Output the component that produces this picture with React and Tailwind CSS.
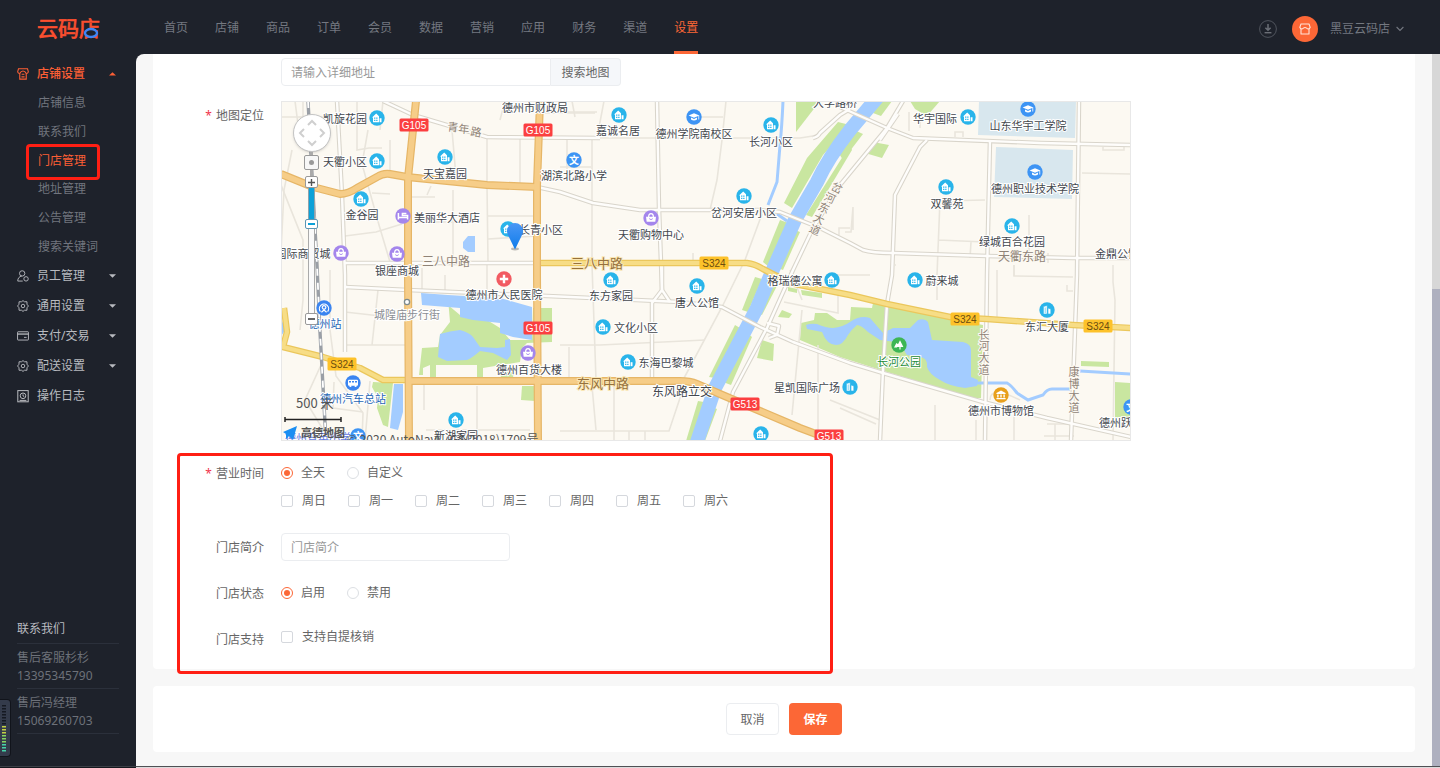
import React, { useState } from "react";
import clsx from "clsx";

/* ================= STATIC DATA ================= */
const topNav = ["首页", "店铺", "商品", "订单", "会员", "数据", "营销", "应用", "财务", "渠道", "设置"];

const shopMenu = ["店铺信息", "联系我们", "门店管理", "地址管理", "公告管理", "搜索关键词"];

const sideMenu = [
  { label: "员工管理", icon: StaffIcon, expandable: true },
  { label: "通用设置", icon: GearIcon, expandable: true },
  { label: "支付/交易", icon: CardIcon, expandable: true },
  { label: "配送设置", icon: GearIcon, expandable: true },
  { label: "操作日志", icon: LogIcon, expandable: false },
];

const contacts = [
  { name: "售后客服杉杉", phone: "13395345790" },
  { name: "售后冯经理", phone: "15069260703" },
];

const weekDays = ["周日", "周一", "周二", "周三", "周四", "周五", "周六"];

export default function App() {
  const [hours, setHours] = useState("all");
  const [status, setStatus] = useState("on");

  return (
    <div className="flex h-screen flex-col overflow-hidden bg-[#1e222b] text-xs text-[#666] font-['Noto_Sans','Noto_Sans_CJK_SC',sans-serif]">
      <Header />
      <div className="flex min-h-0 flex-1">
        <Sidebar />

        {/* MAIN CONTENT */}
        <main className="flex min-w-0 flex-1 flex-col gap-[17px] overflow-hidden rounded-tl-lg bg-[#f7f7f7] px-[17px]">
          <form id="store-form" className="relative rounded-b bg-white pt-1 pb-4">
            <FormRow className="mb-[15px]">
              <div className="flex h-7">
                <input
                  type="text"
                  aria-label="详细地址"
                  placeholder="请输入详细地址"
                  className="w-[270px] rounded-l border border-[#ebedf0] px-[9px] pt-0.5 outline-none placeholder:text-[#999]"
                />
                <button type="button" className="w-[70px] rounded-r border border-l-0 border-[#ebedf0] bg-[#f5f7fa] pt-0.5">
                  搜索地图
                </button>
              </div>
            </FormRow>

            <div className="flex flex-col gap-[18px]">
              <FormRow label="地图定位" required>
                <StoreMap />
              </FormRow>

              <FormRow label="营业时间" required>
                <div className="flex h-7 items-center gap-[22px]">
                  <Radio name="hours" label="全天" checked={hours === "all"} onChange={() => setHours("all")} />
                  <Radio name="hours" label="自定义" checked={hours === "custom"} onChange={() => setHours("custom")} />
                </div>
                <div className="flex h-7 items-center gap-[22px]">
                  {weekDays.map((day) => (
                    <Checkbox key={day} label={day} />
                  ))}
                </div>
              </FormRow>

              <FormRow label="门店简介" htmlFor="intro">
                <input
                  id="intro"
                  type="text"
                  placeholder="门店简介"
                  className="h-7 w-[229px] rounded border border-[#ebedf0] px-[9px] outline-none placeholder:text-[#999]"
                />
              </FormRow>

              <FormRow label="门店状态">
                <div className="flex h-7 items-center gap-[22px]">
                  <Radio name="status" label="启用" checked={status === "on"} onChange={() => setStatus("on")} />
                  <Radio name="status" label="禁用" checked={status === "off"} onChange={() => setStatus("off")} />
                </div>
              </FormRow>

              <FormRow label="门店支持">
                <div className="flex h-6 items-center">
                  <Checkbox label="支持自提核销" />
                </div>
              </FormRow>
            </div>

            {/* Highlight frame around the lower fields */}
            <div className="pointer-events-none absolute -bottom-[5px] left-6 h-[221px] w-[656px] rounded border-3 border-[#ff1f14]" />
          </form>

          {/* ACTIONS */}
          <div className="flex justify-center gap-[10px] rounded bg-white py-[17px]">
            <button type="button" className="h-8 w-[53px] rounded border border-[#ebedf0] pt-0.5">取消</button>
            <button type="submit" form="store-form" className="h-8 w-[53px] rounded bg-[#fc6736] pt-0.5 font-bold text-white">
              保存
            </button>
          </div>
        </main>

        {/* Scrollbar */}
        <div className="flex w-2 flex-col justify-end bg-[#d7d7d7]">
          <div className="h-[67%] bg-[#aeb0bf]" />
        </div>
      </div>

      {/* Bottom edge */}
      <div className="flex h-[2px]">
        <div className="w-[136px] border-t border-[#3c3f46] bg-[#15181e]" />
        <div className="flex-1 border-t border-[#4f5054] bg-[#dcdcdc]" />
      </div>
    </div>
  );
}

/* ================= HEADER ================= */
function Header() {
  return (
    <header className="flex h-[54px] shrink-0 items-center text-[#747880]">
      <a href="#home" aria-label="云码店" className="ml-[37px] w-[127px] pt-1">
        <svg width="68" height="28" viewBox="0 0 68 28" className="overflow-visible font-['Noto_Sans_CJK_SC',sans-serif]">
          <text x="0" y="21" fontSize="21" fill="#fb4f2f" stroke="#fb4f2f" strokeWidth="0.7">云码店</text>
          <ellipse cx="54" cy="18" rx="6" ry="4" fill="#1e222b" stroke="#3f86f5" strokeWidth="2.4" />
        </svg>
      </a>
      <nav className="flex h-full gap-[27px]">
        {topNav.map((item) => (
          <a
            key={item}
            href={`#${item}`}
            className={clsx(
              "flex h-full items-center border-b-3 pt-[5px]",
              item === "设置" ? "border-[#fc6736] text-[#fc6736]" : "border-transparent"
            )}
          >
            {item}
          </a>
        ))}
      </nav>
      <div className="ml-auto flex items-center pt-[3px] pr-9">
        <button type="button" aria-label="下载">
          <svg width="18" height="18" viewBox="0 0 18 18" fill="none" stroke="#6b6f77">
            <circle cx="9" cy="9" r="8.4" strokeWidth="0.9" stroke="#565a63" />
            <path d="M9 4v6M6.4 7.8 9 10.3l2.6-2.5" strokeWidth="1.5" />
            <path d="M5.6 12.7h6.8" strokeWidth="1.4" />
          </svg>
        </button>
        <span className="ml-[15px] flex h-[26px] w-[26px] items-center justify-center rounded-full bg-[#fc6736] text-[#ffe3d8]">
          <svg width="12" height="12" viewBox="0 0 12 12" fill="none" stroke="currentColor" strokeWidth="1.1">
            <path d="M2 1h8l1.2 3.4L10 6v5H2V6L.8 4.4z" strokeLinejoin="round" />
            <path d="M1.2 5.2q1.6 1.6 3.2 0 1.6-1.4 3.2 0 1.6 1.6 3.2 0" />
          </svg>
        </span>
        <button type="button" className="ml-3 flex items-center gap-1.5">
          黑豆云码店
          <svg width="8" height="6" viewBox="0 0 8 6" fill="none" stroke="currentColor" strokeWidth="1.1">
            <path d="M.6 1 4 4.4 7.4 1" />
          </svg>
        </button>
      </div>
    </header>
  );
}

/* ================= SIDEBAR ================= */
function Sidebar() {
  return (
    <aside className="relative flex w-[136px] shrink-0 flex-col pt-[5px] text-[#b9bbc0]">
      <a href="#shop" className="flex h-[30px] items-center gap-2 pr-5 pl-[17px] font-medium text-[#fc5f35]">
        <ShopIcon />
        店铺设置
        <Caret up />
      </a>
      <ul className="grid h-[172px] pl-[38px] text-[#71757e]">
        {shopMenu.map((item) => (
          <li key={item} className="relative flex items-center">
            <a href={`#${item}`} className={item === "门店管理" ? "text-[#fc5f35]" : ""}>{item}</a>
            {item === "门店管理" && (
              <span className="pointer-events-none absolute -top-0.5 -left-3 h-9 w-[74px] rounded border-3 border-[#ff1f14]" />
            )}
          </li>
        ))}
      </ul>
      {sideMenu.map(({ label, icon: Icon, expandable }) => (
        <a key={label} href={`#${label}`} className="flex h-[30px] items-center gap-2 pr-5 pl-[17px]">
          <Icon />
          {label}
          {expandable && <Caret />}
        </a>
      ))}

      {/* Contact block */}
      <div className="mt-auto px-[17px] pb-8 leading-[18px]">
        <h2 className="border-b border-[#2b303b] pb-[5px]">联系我们</h2>
        {contacts.map((c) => (
          <div key={c.phone} className="border-b border-[#2b303b] pt-[5px] pb-[3px] text-[#6d7179]">
            <p>{c.name}</p>
            <p>{c.phone}</p>
          </div>
        ))}
      </div>

      {/* Level meter docked on the left edge */}
      <div className="absolute bottom-[9px] left-0 h-[58px] w-[11px] rounded-r border border-l-0 border-[#11141b] bg-[#343b4b]">
        <svg width="8" height="48" viewBox="0 0 8 48" className="mt-1">
          {Array.from({ length: 16 }, (_, i) => (
            <rect
              key={i}
              x="2"
              y={i * 3 + 1}
              width="4"
              height="1.5"
              fill={i < 7 ? "#151922" : i < 10 ? "#c3d043" : i < 13 ? "#86d561" : "#45d3a9"}
            />
          ))}
        </svg>
      </div>
    </aside>
  );
}

function Caret({ up }) {
  return (
    <svg width="7" height="4" viewBox="0 0 7 4" className="ml-auto" fill="currentColor">
      <path d={up ? "M0 3.5 3.5.3 7 3.5z" : "M0 .3h7L3.5 3.8z"} />
    </svg>
  );
}

/* ================= FORM PARTS ================= */
function FormRow({ label, required, htmlFor, className, children }) {
  return (
    <div className={clsx("flex gap-[17px]", className)}>
      <div className="flex h-7 w-[111px] shrink-0 items-center justify-end gap-1 pt-0.5">
        {required && <span className="text-[#f0354b]">*</span>}
        {label && <label htmlFor={htmlFor}>{label}</label>}
      </div>
      <div className="min-w-0 flex-1">{children}</div>
    </div>
  );
}

function Radio({ name, label, checked, onChange }) {
  return (
    <label className="flex items-center gap-2">
      <input
        type="radio"
        name={name}
        checked={checked}
        onChange={onChange}
        className="h-3 w-3 appearance-none rounded-full border border-[#dcdfe3] bg-white bg-clip-content p-[2px] checked:border-[#fc6736] checked:bg-[#fc6736]"
      />
      {label}
    </label>
  );
}

function Checkbox({ label }) {
  return (
    <label className="flex items-center gap-[9px]">
      <input
        type="checkbox"
        className="h-3 w-3 appearance-none rounded-xs border border-[#d5d8dd] bg-white checked:border-[#fc6736] checked:bg-[#fc6736]"
      />
      {label}
    </label>
  );
}

/* ================= MAP DATA ================= */
const greens = [
  "796,101 820,101 796,132",
  "784,203 807,158 838,122 850,125 823,155 792,208",
  "850,145 852,150 812,217 806,215",
  "780,220 788,223 769,267 763,262",
  "795,230 800,232 783,270 778,268",
  "755,277 762,279 748,312 742,310",
  "773,278 780,280 762,315 757,313",
  "735,325 740,328 715,378 709,377",
  "747,333 752,337 731,385 723,382",
  "698,401 704,402 693,441 686,441",
  "712,407 717,409 705,441 700,441",
  "840,123 846,126 840,136",
  "873,113 880,101 892,101 881,116",
  "852,129 863,134 843,160 838,152",
  "873,142 889,145 882,158 865,153",
  "910,101 940,101 927,116 915,109",
  "448,298 448,305 460,315 487,320 500,328 510,340 532,340 533,308 552,308 552,342 527,343 522,348 520,362 483,368 483,378 477,377 477,365 436,365 436,377 430,377 430,365 423,368 423,375 419,375 422,348 438,347 440,335 450,322",
  "373,382 393,383 388,427 383,425 377,408 378,398 372,387",
  "522,386 535,386 535,401 521,400",
  "500,370 514,368 513,378 501,378",
  "801,323 814,320 815,313 827,313 837,320 850,320 851,307 872,308 873,303 983,325 981,398 973,398 887,372 840,357 800,340",
  "782,310 792,314 789,318 778,317",
  "762,340 774,344 773,361 757,358",
  "801,290 822,293 822,298 802,295",
  "788,287 797,289 797,293 788,291",
  "1081,361 1109,362 1109,367 1081,366",
  "1115,382 1131,383 1131,417 1115,418",
];

const waters = [
  "M421 293L448 295L500 298L532 307V340L513 337L500 333V323L473 320L460 317V308L422 305Z",
  "M440 334Q450 331 460 330Q470 333 473 337L480 347L497 348L505 347V340L510 339L511 355L507 360L493 353L480 351Q472 358 467 360L447 361L438 357Z",
  "M394 384H403V412L398 430L390 428Z",
  "M463 242L468 236H475V252H468L463 248Z",
  "M806 325Q811 323 817 324Q826 328 833 328Q843 327 850 322Q860 315 870 318L883 333L893 328L910 328L918 320Q925 318 928 322Q930 331 932 340L963 342Q971 344 971 350V377L978 380L977 386L965 388Q949 386 940 380Q929 374 927 367Q928 358 920 357L907 355Q903 350 903 343L880 340L868 332Q861 325 857 325Q852 329 848 335Q843 345 836 345Q827 345 822 332L807 329Z",
  "M281 318L284 326V332L281 336Z",
];

const streams = [
  "M783 101Q782 125 780 145L777 182L768 205",
  "M777 214L787 221",
  "M977 383L1007 383Q1011 385 1017 393L1028 400L1043 395Q1047 389 1052 389H1070",
  "M1080 371L1131 374",
];

const lanes = [
  "M281 252L284 190L292 150",
  "M357 101V150L369 148H382M390 140V170",
  "M368 130L362 164L379 225L390 262M380 130L383 101",
  "M372 193L390 194M345 236L376 232L402 224",
  "M408 197H435M427 195L431 186",
  "M452 130L456 177M453 190V262M487 137V185L488 262",
  "M488 239L537 236M410 222H462M488 216H537",
  "M345 312L407 319M345 345H408M372 345L378 290",
  "M281 185L303 240V300L300 330M330 270V330L336 376L363 413L362 441",
  "M321 365L305 400L330 441M334 382L333 408L363 412",
  "M370 381L365 441M424 377V410M477 386V430M426 430H530",
  "M445 275V290M487 262V290M422 268V290",
  "M520 139V186M505 101L500 120M545 113H595M572 101L575 117",
  "M604 101L597 138M560 112H597M567 140V169M560 167H591M592 138V265L596 380",
  "M599 138H800L813 136",
  "M726 101L722 140L717 180L710 210M692 117H723",
  "M762 214L745 260L722 307L683 380",
  "M560 345H600L705 340M569 347V380M592 386L596 430",
  "M614 386V441M560 431H669L682 392M629 431V441M645 431V441",
  "M693 253V262M790 270L802 300M784 302L838 313V293",
  "M802 310L792 415M818 345V436L850 449M830 400L880 420",
  "M838 285V275H870M839 235V228H850",
  "M909 112V131M920 128V112M955 137V132H963V137",
  "M939 201L985 200M940 200L937 275M938 240L985 242M971 242L970 258",
  "M1029 215V253M1048 263V253M1082 173L1131 174M1014 265V276L1073 277",
  "M895 265H896M937 275V300M1014 276V265M1067 285V291H1073M1113 265V282L1115 300L1113 441",
  "M853 230V207M845 232H851L853 207",
  "M935 405V441M976 420V441M1014 405V441M1047 424H1074M1044 436H1074M1055 424V441",
  "M840 408L876 424M997 270V320",
  "M1020 400Q990 385 990 400",
  "M1103 147V150H1124V146",
  "M295 101L300 140M281 117H330M303 101V118",
];

const streets = [
  "M337 101L342 195L345 275V352",
  "M383 101L413 115L487 137L600 138",
  "M813 138Q818 137 820 133L840 115L850 109",
  "M345 263H537",
  "M345 287L408 290L570 297L680 302L722 307L760 327L793 342L850 363L883 373L983 402L1047 418L1131 437",
  "M657 101L659 208L662 290",
  "M662 262V290L652 303V381M662 290L670 302",
  "M537 187L560 192L593 203L640 210H760L780 212L820 228L850 243L863 250Q872 253 893 253L987 256L1073 258H1131",
  "M903 101L887 128L840 185L813 228L793 270L767 328L733 392L720 441",
  "M840 107L887 128L913 138L1040 143L1131 145",
  "M927 140L920 147L895 195L892 275L887 304L883 370L880 441",
  "M990 140L987 275L985 441",
  "M1079 101L1077 275L1071 441",
  "M898 114L889 127L880 140",
  "M767 323L779 326L777 335L769 338",
];

const yellowRoads = [
  "M284 308L287 332L283 347L323 357L360 368L383 380H408",
  "M540 263H747Q755 264 763 269L790 283L850 295L887 304L950 317L987 319L1073 325L1131 328",
];

const orangeRoads = [
  "M281 174L313 187L340 194Q348 194 357 188L377 177Q383 173 390 174L407 177L487 185L537 187",
  "M409 381H680Q690 381 697 384L720 394L760 411L800 428L840 443",
  "M416 101L408 178V275L409 441",
  "M540 101L537 185V275L538 441",
];

// type, icon x, icon y, label, label centre x, label centre y
const places = [
  ["house", 377, 118, "凯旋花园", 345, 119],
  ["house", 377, 161, "天衢小区", 345, 162],
  ["house", 445, 157, "天宝嘉园", 445, 174],
  ["house", 361, 199, "金谷园", 362, 215],
  ["bed", 403, 216, "美丽华大酒店", 447, 218],
  ["bag", 341, 253, "国际商贸城", 303, 254],
  ["bag", 397, 254, "银座商城", 397, 271],
  ["house", 508, 229, "长青小区", 541, 230],
  ["house", 619, 115, "嘉诚名居", 618, 131],
  ["cap", 694, 117, "德州学院南校区", 694, 134],
  ["house", 771, 125, "长河小区", 771, 142],
  ["school", 574, 160, "湖滨北路小学", 574, 176],
  ["house", 744, 196, "岔河安居小区", 744, 213],
  ["bag", 651, 218, "天衢购物中心", 651, 235],
  ["house", 968, 117, "华宇国际", 935, 119],
  ["cap", 1028, 109, "山东华宇工学院", 1028, 126],
  ["cap", 1035, 172, "德州职业技术学院", 1035, 189],
  ["house", 946, 187, "双馨苑", 947, 204],
  ["house", 1012, 226, "绿城百合花园", 1012, 242],
  ["hospital", 504, 279, "德州市人民医院", 504, 295],
  ["station", 324, 308, "德州站", 325, 324, "#1f66b5"],
  ["bag", 528, 353, "德州百货大楼", 529, 370],
  ["bus", 353, 383, "德州汽车总站", 353, 399, "#1f66b5"],
  ["house", 456, 420, "新湖家园", 456, 436],
  ["school", 358, 436, "德州育英小学", 318, 438, "#5f78e0"],
  ["house", 611, 280, "东方家园", 611, 296],
  ["house", 697, 286, "唐人公馆", 697, 303],
  ["house", 832, 280, "格瑞德公寓", 795, 281],
  ["house", 603, 327, "文化小区", 636, 328],
  ["house", 628, 362, "东海巴黎城", 666, 363],
  ["tower", 850, 387, "星凯国际广场", 807, 388],
  ["house", 761, 434, "", 0, 0],
  ["house", 915, 280, "蔚来城", 942, 281],
  ["park", 899, 345, "长河公园", 899, 362, "#1d8a35"],
  ["tower", 1047, 310, "东汇大厦", 1047, 327],
  ["museum", 1001, 395, "德州市博物馆", 1001, 411],
  ["school", 1131, 407, "德州跃华学校", 1132, 423],
];

const areaLabels = [
  ["德州市财政局", 535, 108],
  ["大学路桥", 835, 103],
  ["金鼎公馆", 1117, 254],
];

// Road names set one character at a time: char, x, y, rotation
const roadChars = [
  ["青", 453, 127, 6], ["年", 464, 129, 6], ["路", 476, 132, 10],
  ["长", 984, 335, 0], ["河", 984, 346, 0], ["大", 984, 358, 0], ["道", 984, 370, 0],
  ["康", 1074, 372, 0], ["博", 1074, 384, 0], ["大", 1074, 396, 0], ["道", 1074, 408, 0],
  ["岔", 837, 188, 25], ["河", 830, 198, 25], ["东", 824, 208, 25], ["大", 819, 219, 25], ["道", 815, 230, 25],
];

const shields = [
  ["G105", 414, 125], ["G105", 538, 130], ["G105", 538, 328], ["G513", 745, 404], ["G513", 829, 436],
  ["S324", 714, 263], ["S324", 342, 364], ["S324", 965, 319], ["S324", 1098, 326],
];

const poiColors = {
  house: "#29b4ea",
  tower: "#29b4ea",
  cap: "#3d94f4",
  school: "#3d94f4",
  bed: "#a486ec",
  bag: "#a486ec",
  hospital: "#f25b62",
  station: "#3a84f0",
  bus: "#3a84f0",
  park: "#3eb655",
  museum: "#e8a01c",
};

/* ================= MAP ================= */
function StoreMap() {
  return (
    <div className="relative h-[340px] w-full max-w-[850px] overflow-hidden border border-[#e8e8e8] bg-[#fcf9f2]">
      <svg
        viewBox="282 102 848 338"
        preserveAspectRatio="xMinYMin slice"
        className="h-full w-full font-['Noto_Sans_CJK_SC',sans-serif]"
        fill="none"
        textAnchor="middle"
      >
        <g fill="#d8e7ee">
          <path d="M979 101h97l-1 37-97-3zM996 147l77 3-1 49-78-2z" />
        </g>
        <g fill="#c9e6a0">
          {greens.map((points) => <polygon key={points} points={points} />)}
        </g>
        <g stroke="#e9e5dc" strokeWidth="1.6">
          {lanes.map((d) => <path key={d} d={d} />)}
        </g>
        <g fill="#a3ccff">
          {waters.map((d) => <path key={d} d={d} />)}
        </g>
        <g stroke="#a3ccff" strokeWidth="3">
          {streams.map((d) => <path key={d} d={d} />)}
          <path d="M882 92L850 130Q828 158 817 182L795 220L771 274L757 308L715 388L696 445" strokeWidth="14" />
        </g>
        <RoadLayer paths={streets} edge="#d9d5cb" fill="#fefdfb" outer={4.5} inner={2.4} />
        <RoadLayer paths={yellowRoads} edge="#ebc75c" fill="#f7dd86" outer={6.5} inner={4.2} />
        <RoadLayer paths={orangeRoads} edge="#e6b667" fill="#f6cd88" outer={8} inner={5.6} />

        {/* Railway */}
        <path d="M308 101L317 265L320 332L326 441" stroke="#9a9fa6" strokeWidth="3.4" />
        <path d="M308 101L317 265L320 332L326 441" stroke="#fff" strokeWidth="1.8" strokeDasharray="7 7" />

        {/* Road names */}
        <g fontSize="11" fill="#8f8377" stroke="#fcf9f2" strokeWidth="2" paintOrder="stroke">
          <text x="446" y="266" fontSize="12">三八中路</text>
          <text x="1022" y="261" fontSize="12">天衢东路</text>
          {roadChars.map(([char, x, y, angle]) => (
            <text key={`${x}-${y}`} x={x} y={y + 4} transform={`rotate(${angle} ${x} ${y})`}>{char}</text>
          ))}
        </g>
        <g fontSize="13" fill="#96713c" stroke="#f9e6b4" strokeWidth="2" paintOrder="stroke">
          <text x="597" y="268">三八中路</text>
          <text x="603" y="388">东风中路</text>
        </g>

        {/* Road shields */}
        {shields.map(([code, x, y]) => (
          <g key={`${code}-${x}-${y}`}>
            <rect x={x - 14.5} y={y - 6.5} width="29" height="13" rx="1.5" fill={code[0] === "G" ? "#fb3f40" : "#fdc22a"} />
            <text
              x={x}
              y={y + 3.5}
              fontSize="10"
              className="font-['Liberation_Sans',sans-serif]"
              fill={code[0] === "G" ? "#fff" : "#6b4d10"}
            >
              {code}
            </text>
          </g>
        ))}

        {/* Places */}
        <circle cx="407" cy="302" r="2.6" fill="#fff" stroke="#7d8b8e" strokeWidth="1.3" />
        <g fontSize="11" fill="#43474d" stroke="#fff" strokeWidth="2" paintOrder="stroke">
          <text x="407" y="319" fill="#8a8d92">城隍庙步行街</text>
          <text x="682" y="396" fontSize="12">东风路立交</text>
          {areaLabels.map(([label, x, y]) => (
            <text key={label} x={x} y={y + 4}>{label}</text>
          ))}
          {places.map(([, x, y, label, lx, ly, color]) => (
            <text key={`${x}-${y}`} x={lx} y={ly + 4} fill={color}>{label}</text>
          ))}
        </g>
        {places.map(([type, x, y]) => (
          <g key={`${x}-${y}`} transform={`translate(${x} ${y})`}>
            <circle r="7.7" fill={poiColors[type]} />
            <PlaceGlyph type={type} />
          </g>
        ))}

        {/* Store marker */}
        <defs>
          <linearGradient id="pin" x1="0" y1="0" x2="0" y2="1">
            <stop offset="0" stopColor="#4a97f5" />
            <stop offset="1" stopColor="#0f7cea" />
          </linearGradient>
        </defs>
        <ellipse cx="515" cy="249" rx="4" ry="1.4" fill="#000" fillOpacity="0.25" />
        <path d="M515 249.500L508 235Q507 233 507 231A8 8 0 0 1 523 231Q523 233 522 235Z" fill="url(#pin)" />

        {/* Scale and copyright */}
        <path d="M285 417v5M285 419.500h56M341 417v5" stroke="#222" strokeWidth="1.5" />
        <path d="M283 432l14-6-4 14-4-4-3 3v-5z" fill="#1b8ef2" />
        <g fill="#555" textAnchor="start">
          <text x="296" y="408" fontSize="13">500 米</text>
          <text x="301" y="437" fontSize="11" fontWeight="700">高德地图</text>
          <text x="347" y="444" fontSize="12">© 2020 AutoNavi - GS(2018)1709号</text>
        </g>
      </svg>
      <MapControls />
    </div>
  );
}

function RoadLayer({ paths, edge, fill, outer, inner }) {
  return (
    <g strokeLinejoin="round">
      {paths.map((d) => <path key={`edge-${d}`} d={d} stroke={edge} strokeWidth={outer} />)}
      {paths.map((d) => <path key={`fill-${d}`} d={d} stroke={fill} strokeWidth={inner} />)}
    </g>
  );
}

function PlaceGlyph({ type }) {
  switch (type) {
    case "house":
      return (
        <g fill="#fff">
          <path d="M-5-.4-.8-4.400 2-1.800V4.200H-4V-.4z" />
          <path d="M2.600.2h1.900v4H2.600z" />
          <path d="M-2.900-.4h1.300V.8h-1.300zM-.8-.4H.5V.8H-.8zM-2.900 1.700h1.300v1.200h-1.300zM-.8 1.700H.5v1.200H-.8z" fill="#29b4ea" />
        </g>
      );
    case "tower":
      return <path d="M-3.6-3.4.2-4.6V4h-3.8zM1-2l2.8 1v5H1zM-1.8-2.5V3" fill="#fff" stroke="#29b4ea" strokeWidth="0.6" />;
    case "cap":
      return (
        <g fill="#fff">
          <path d="M-5.4-1.6 0-3.8l5.4 2.2L0 .8z" />
          <path d="M-3 .6 0 2 3 .6v2Q0 4.6-3 2.6z" />
          <path d="M4.4-1.4h.8v4h-.8z" />
        </g>
      );
    case "school":
      return <text y="3.5" fontSize="10" fontWeight="700" fill="#fff" textAnchor="middle">文</text>;
    case "bed":
      return <path d="M-4.6-3v6.4M-4.6 1.6h9.2M4.6 3.4V-.4H-.6v-2h4" stroke="#fff" strokeWidth="1.5" />;
    case "bag":
      return (
        <g>
          <path d="M-5-1.200H5l-.7 5h-8.600z" fill="#fff" />
          <path d="M-2.400-1Q-2.400-4.400 0-4.400t2.400 3.400" stroke="#fff" strokeWidth="1.2" />
          <path d="M-1.8.6Q0 2.8 1.8.6" stroke="#a486ec" strokeWidth="0.9" />
        </g>
      );
    case "hospital":
      return <path d="M0-4.2v8.4M-4.2 0h8.4" stroke="#fff" strokeWidth="2.4" />;
    case "station":
      return <path d="M-3.6 3.6A4.6 4.6 0 1 1 3.6 3.6M0-2.4a1.8 1.8 0 1 0 .1 0M-2.6 4.2 0 2l2.6 2.2" stroke="#fff" strokeWidth="1.2" />;
    case "bus":
      return (
        <g>
          <rect x="-5" y="-3.2" width="10" height="6" rx="1" fill="#fff" />
          <path d="M-4-2h2v1.6h-2zM-1-2h2v1.6h-2zM2-2h2v1.6H2z" fill="#3a84f0" />
          <circle cx="-2.6" cy="3" r="1.1" fill="#fff" />
          <circle cx="2.6" cy="3" r="1.1" fill="#fff" />
        </g>
      );
    case "park":
      return <path d="M1-4.8 4.4 2H1.6v2.4H.4V2h-2.8zM-2.6-2-.8-.8-2 2.6h-3z" fill="#fff" />;
    case "museum":
      return <path d="M0-4.6 4.6-2v1h-9.2v-1zM-3.8-.4h1.4v3h-1.4zM-.7-.4H.7v3H-.7zM2.4-.4h1.4v3H2.4zM-4.6 3h9.2v1.2h-9.2z" fill="#fff" />;
    default:
      return null;
  }
}

function MapControls() {
  return (
    <div className="absolute top-3 left-[10px] flex w-[39px] flex-col items-center">
      <button type="button" aria-label="移动地图" className="h-[38px] w-[38px] rounded-full border border-[#c4c4c4] bg-white shadow-sm">
        <svg viewBox="0 0 36 36" className="h-full w-full" fill="none" stroke="#cfcfcf" strokeWidth="2">
          <path d="m14 10 4-4 4 4M14 26l4 4 4-4M10 14l-4 4 4 4M26 14l4 4-4 4" />
        </svg>
      </button>
      <span className="h-[3px] w-[3px] bg-[#aaa]" />
      <button type="button" aria-label="定位" className="flex h-[15px] w-[15px] items-center justify-center rounded-xs border border-[#999] bg-[#f7f7f7]">
        <span className="h-[5px] w-[5px] rounded-full bg-[#999]" />
      </button>
      <span className="h-[6px] w-[3px] bg-[#aaa]" />
      <button type="button" aria-label="放大" className="flex h-3 w-[13px] items-center justify-center rounded-xs border border-[#999] bg-white">
        <svg width="7" height="7" viewBox="0 0 7 7" stroke="#555" strokeWidth="1.4"><path d="M3.5 0v7M0 3.5h7" /></svg>
      </button>
      <span className="h-[31px] w-[7px] border-x border-[#8fa3ac] bg-[#0ba1d8]" />
      <span className="flex h-[10px] w-[13px] items-center justify-center rounded-xs border border-[#5c96b3] bg-white">
        <span className="h-[2px] w-[7px] bg-[#0ba1d8]" />
      </span>
      <span className="h-[84px] w-[7px] border-x border-[#aaa] bg-[#fafafa]" />
      <button type="button" aria-label="缩小" className="flex h-3 w-[13px] items-center justify-center rounded-xs border border-[#999] bg-white">
        <span className="h-[2px] w-[7px] bg-[#666]" />
      </button>
    </div>
  );
}

/* ================= ICONS ================= */
function ShopIcon() {
  return (
    <svg width="12" height="12" viewBox="0 0 13 13" fill="none" stroke="currentColor" strokeWidth="1.2">
      <path d="M1.6.8h9.8L12.300 4.200Q11.800 6 10 6V12H3V6Q1.200 6 .7 4.200z" />
      <path d="M3.200 5.600Q4.200 3.200 6.500 3.200T9.800 5.600M5 6.800h3M4.800 9.600h3.400" />
    </svg>
  );
}

function StaffIcon() {
  return (
    <svg width="12" height="12" viewBox="0 0 13 13" fill="none" stroke="currentColor">
      <circle cx="5.6" cy="3.7" r="2.9" />
      <path d="M.8 12c0-3 1.6-5 4.4-5.4M.8 12h5.4" />
      <circle cx="9.8" cy="9.6" r="2.4" />
    </svg>
  );
}

function GearIcon() {
  return (
    <svg width="12" height="12" viewBox="0 0 13 13" fill="none" stroke="currentColor" strokeLinejoin="round">
      <path d="m6.5.6 1.500 1.300h2.800v2.700l1.600 1.900-1.600 1.900v2.700H8L6.500 12.400 5 11.100H2.200V8.400L.6 6.500l1.600-1.900V1.900H5z" />
      <circle cx="6.5" cy="6.5" r="1.9" />
    </svg>
  );
}

function CardIcon() {
  return (
    <svg width="12" height="12" viewBox="0 0 13 13" fill="none" stroke="currentColor">
      <rect x=".6" y="1.9" width="11.8" height="9" rx=".6" />
      <path d="M.6 4.4h11.8" strokeWidth="1.4" />
      <path d="M7.6 8h2.8" />
    </svg>
  );
}

function LogIcon() {
  return (
    <svg width="12" height="13" viewBox="0 0 12 13" fill="none" stroke="currentColor">
      <rect x=".8" y=".6" width="10.4" height="11.2" />
      <circle cx="6" cy="5.8" r="2.8" />
      <path d="M6 4.4v1.5l1.2.6M2.6 10.4h6.8" />
    </svg>
  );
}
